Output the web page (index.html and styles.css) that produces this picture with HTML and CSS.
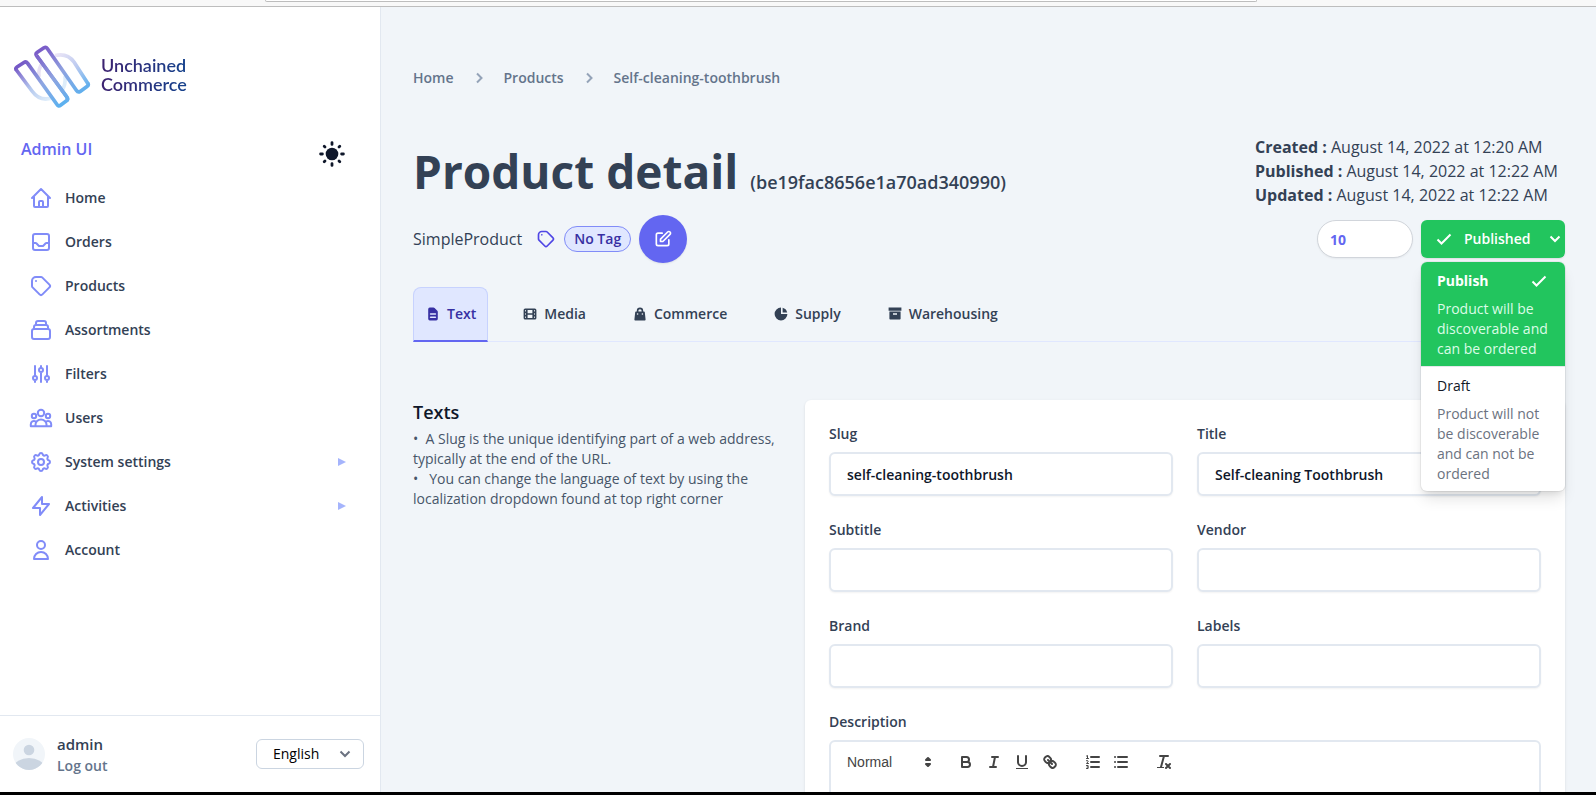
FILE: index.html
```html
<!DOCTYPE html>
<html lang="en">
<head>
<meta charset="utf-8">
<title>Product detail - Unchained Commerce</title>
<link rel="stylesheet" href="styles.css">
</head>
<body>
<div class="browser-edge"><div class="address-bar"></div></div>
<div class="app">
  <aside class="sidebar">
    <a class="brand" href="#">
      <svg class="brand-mark" viewBox="0 0 78 64" fill="none" stroke-width="3.700" stroke-linejoin="round" aria-hidden="true">
        <defs>
          <linearGradient id="bar" gradientUnits="userSpaceOnUse" x1="26" y1="6" x2="62" y2="54"><stop offset="0" stop-color="#7a5cc8"/><stop offset=".5" stop-color="#8fa3e0"/><stop offset="1" stop-color="#5fb0ee"/></linearGradient>
          <linearGradient id="barLeft" gradientUnits="userSpaceOnUse" x1="8" y1="18" x2="48" y2="60"><stop offset="0" stop-color="#7558c6"/><stop offset=".5" stop-color="#8fa6e2"/><stop offset="1" stop-color="#5db1ef"/></linearGradient>
          <linearGradient id="fadeLeft" gradientUnits="userSpaceOnUse" x1="4" y1="20" x2="36" y2="56"><stop offset="0" stop-color="#7558c6"/><stop offset=".55" stop-color="#b4c8ee"/><stop offset="1" stop-color="#e2f0fb"/></linearGradient>
          <linearGradient id="fadeRight" gradientUnits="userSpaceOnUse" x1="44" y1="8" x2="75" y2="42"><stop offset="0" stop-color="#ebe5f6"/><stop offset=".5" stop-color="#bccaf0"/><stop offset="1" stop-color="#5fb0ee"/></linearGradient>
        </defs>
        <path d="M26 32C25 26 27 21 30 17" stroke="#e9e2f4"/>
        <path d="M52 31C53 38 51 43 48 47" stroke="#deedfa"/>
        <path d="M3 24.500L19 46C24 53 31 56 40 52.500" stroke="url(#fadeLeft)"/>
        <path d="M42 10.500C50 8.500 56 10 61 17L75 38.800" stroke="url(#fadeRight)"/>
        <path d="M23.500 10.500L53.500 51.500Q55.500 54.200 53.500 55.800L47.500 60.200Q45.500 61.800 44 59.500L14.500 18.200Q13 16.200 11 17.500L4 22Q2.200 23.200 3.300 25" stroke="url(#barLeft)"/>
        <path d="M23.500 10.500Q22.300 8.500 24.300 7.200L31 2.800Q33 1.600 34.300 3.500L63.500 45.500Q65 47.800 67.200 46.400L74 41.600Q76 40.200 74.800 38.300" stroke="url(#bar)"/>
        <path d="M23.500 10.500L53.500 51.500Q55.500 54.200 53.500 55.800" stroke="url(#bar)"/>
      </svg>
      <span class="brand-name">Unchained<br>Commerce</span>
    </a>
    <div class="sidebar-title">
      <span>Admin UI</span>
      <button class="theme-toggle" type="button" aria-label="Toggle theme">
        <svg viewBox="0 0 28 28" width="28" height="28" stroke="currentColor" stroke-width="2.800" stroke-linecap="round"><circle cx="14" cy="14" r="6.300" fill="currentColor" stroke="none"/><path d="M14 2.600v1.800M14 23.600v1.800M2.600 14h1.800M23.600 14h1.800M6.200 6.200l.8.800M21 21l.8.800M6.200 21.800l.8-.8M21 7l.8-.8"/></svg>
      </button>
    </div>
    <nav class="nav" aria-label="Main">
      <a href="#"><svg class="icon" viewBox="0 0 24 24"><path d="M3 12l2-2m0 0l7-7 7 7M5 10v10a1 1 0 001 1h3m10-11l2 2m-2-2v10a1 1 0 01-1 1h-3m-6 0a1 1 0 001-1v-4a1 1 0 011-1h2a1 1 0 011 1v4a1 1 0 001 1m-6 0h6"/></svg>Home</a>
      <a href="#"><svg class="icon" viewBox="0 0 24 24"><path d="M20 13V6a2 2 0 00-2-2H6a2 2 0 00-2 2v7m16 0v5a2 2 0 01-2 2H6a2 2 0 01-2-2v-5m16 0h-2.586a1 1 0 00-.707.293l-2.414 2.414a1 1 0 01-.707.293h-3.172a1 1 0 01-.707-.293l-2.414-2.414A1 1 0 006.586 13H4"/></svg>Orders</a>
      <a href="#"><svg class="icon" viewBox="0 0 24 24"><path d="M7 7h.01M7 3h5c.512 0 1.024.195 1.414.586l7 7a2 2 0 010 2.828l-7 7a2 2 0 01-2.828 0l-7-7A1.994 1.994 0 013 12V7a4 4 0 014-4z"/></svg>Products</a>
      <a href="#"><svg class="icon" viewBox="0 0 24 24"><path d="M19 11H5m14 0a2 2 0 012 2v6a2 2 0 01-2 2H5a2 2 0 01-2-2v-6a2 2 0 012-2m14 0V9a2 2 0 00-2-2M5 11V9a2 2 0 012-2m0 0V5a2 2 0 012-2h6a2 2 0 012 2v2M7 7h10"/></svg>Assortments</a>
      <a href="#"><svg class="icon" viewBox="0 0 24 24"><path d="M12 6V4m0 2a2 2 0 100 4m0-4a2 2 0 110 4m-6 8a2 2 0 100-4m0 4a2 2 0 110-4m0 4v2m0-6V4m6 6v10m6-2a2 2 0 100-4m0 4a2 2 0 110-4m0 4v2m0-6V4"/></svg>Filters</a>
      <a href="#"><svg class="icon" viewBox="0 0 24 24"><circle cx="12" cy="7" r="3.200"/><circle cx="5" cy="10" r="2.200"/><circle cx="19" cy="10" r="2.200"/><path d="M6.500 20.200V18.500a5.500 5 0 0111 0v1.700zM6.500 20.200H1.800v-2a3.200 3.200 0 014.700-2.800M17.500 20.200h4.700v-2a3.200 3.200 0 00-4.700-2.800"/></svg>Users</a>
      <a href="#"><svg class="icon" viewBox="0 0 24 24"><path d="M10.325 4.317c.426-1.756 2.924-1.756 3.350 0a1.724 1.724 0 002.573 1.066c1.543-.94 3.310.826 2.370 2.370a1.724 1.724 0 001.065 2.572c1.756.426 1.756 2.924 0 3.350a1.724 1.724 0 00-1.066 2.573c.94 1.543-.826 3.310-2.370 2.370a1.724 1.724 0 00-2.572 1.065c-.426 1.756-2.924 1.756-3.350 0a1.724 1.724 0 00-2.573-1.066c-1.543.94-3.310-.826-2.370-2.370a1.724 1.724 0 00-1.065-2.572c-1.756-.426-1.756-2.924 0-3.350a1.724 1.724 0 001.066-2.573c-.94-1.543.826-3.310 2.370-2.370.996.608 2.296.070 2.572-1.065z"/><circle cx="12" cy="12" r="3"/></svg>System settings<svg class="expand" viewBox="0 0 8 8"><path d="M0 0l8 4-8 4z"/></svg></a>
      <a href="#"><svg class="icon" viewBox="0 0 24 24"><path d="M13 10V3L4 14h7v7l9-11h-7z"/></svg>Activities<svg class="expand" viewBox="0 0 8 8"><path d="M0 0l8 4-8 4z"/></svg></a>
      <a href="#"><svg class="icon" viewBox="0 0 24 24"><path d="M16 7a4 4 0 11-8 0 4 4 0 018 0zM12 14a7 7 0 00-7 7h14a7 7 0 00-7-7z"/></svg>Account</a>
    </nav>
    <div class="account">
      <svg class="avatar" viewBox="0 0 32 32" aria-hidden="true"><defs><clipPath id="round"><circle cx="16" cy="16" r="16"/></clipPath></defs><g clip-path="url(#round)"><path fill="#f1f5f9" d="M0 0h32v32H0z"/><circle cx="16" cy="12" r="5.300" fill="#cbd5e1"/><ellipse cx="16" cy="29" rx="15" ry="9" fill="#cbd5e1"/></g></svg>
      <div class="account-text"><span>admin</span><a href="#">Log out</a></div>
      <div class="language">
        <select aria-label="Language"><option>English</option></select>
        <svg viewBox="0 0 12 8"><path d="M1.500 1.500l4.500 4.500 4.500-4.500"/></svg>
      </div>
    </div>
  </aside>

  <main class="main">
    <nav class="breadcrumb" aria-label="Breadcrumb">
      <a href="#">Home</a><svg viewBox="0 0 8 12"><path d="M2 1.500L6.500 6 2 10.500"/></svg><a href="#">Products</a><svg viewBox="0 0 8 12"><path d="M2 1.500L6.500 6 2 10.500"/></svg><a href="#">Self-cleaning-toothbrush</a>
    </nav>

    <header class="head">
      <h1>Product detail <small>(be19fac8656e1a70ad340990)</small></h1>
      <div class="dates">
        <div><b>Created :</b> August 14, 2022 at 12:20 AM</div>
        <div><b>Published :</b> August 14, 2022 at 12:22 AM</div>
        <div><b>Updated :</b> August 14, 2022 at 12:22 AM</div>
      </div>
    </header>

    <div class="meta">
      <span class="kind">SimpleProduct</span>
      <svg class="tag-icon" viewBox="0 0 24 24"><path d="M7 7h.01M7 3h5c.512 0 1.024.195 1.414.586l7 7a2 2 0 010 2.828l-7 7a2 2 0 01-2.828 0l-7-7A1.994 1.994 0 013 12V7a4 4 0 014-4z"/></svg>
      <span class="tag">No Tag</span>
      <button class="edit" type="button" aria-label="Edit tags"><svg viewBox="0 0 24 24"><path d="M11 5H6a2 2 0 00-2 2v11a2 2 0 002 2h11a2 2 0 002-2v-5m-1.414-9.414a2 2 0 112.828 2.828L11.828 15H9v-2.828l8.586-8.586z"/></svg></button>
      <input class="sequence" type="text" value="10" aria-label="Sequence">
      <div class="status">
        <button class="status-button" type="button" aria-expanded="true">
          <svg class="check" viewBox="0 0 16 12"><path d="M1.500 6.500L5.500 10.500 14.500 1.500"/></svg>
          <span>Published</span>
          <svg class="chevron" viewBox="0 0 12 8"><path d="M1.500 1.500l4.500 4.500 4.500-4.500"/></svg>
        </button>
        <div class="menu">
          <button class="menu-item selected" type="button">
            <span class="menu-title">Publish <svg class="check" viewBox="0 0 16 12"><path d="M1.500 6.500L5.500 10.500 14.500 1.500"/></svg></span>
            <span class="menu-text">Product will be discoverable and can be ordered</span>
          </button>
          <button class="menu-item" type="button">
            <span class="menu-title">Draft</span>
            <span class="menu-text">Product will not be discoverable and can not be ordered</span>
          </button>
        </div>
      </div>
    </div>

    <nav class="tabs" aria-label="Product sections">
      <a class="active" href="#"><svg viewBox="0 0 20 20"><path fill-rule="evenodd" d="M4 4a2 2 0 012-2h4.586A2 2 0 0112 2.586L15.414 6A2 2 0 0116 7.414V16a2 2 0 01-2 2H6a2 2 0 01-2-2V4zm2 6a1 1 0 011-1h6a1 1 0 110 2H7a1 1 0 01-1-1zm1 3a1 1 0 100 2h6a1 1 0 100-2H7z"/></svg>Text</a>
      <a href="#"><svg viewBox="0 0 20 20"><path fill-rule="evenodd" d="M4 3a2 2 0 00-2 2v10a2 2 0 002 2h12a2 2 0 002-2V5a2 2 0 00-2-2H4zm3 2h6v4H7V5zm8 8v2h1v-2h-1zm-2-2H7v4h6v-4zm2 0h1V9h-1v2zm1-4V5h-1v2h1zM5 5v2H4V5h1zm0 4H4v2h1V9zm-1 4h1v2H4v-2z"/></svg>Media</a>
      <a href="#"><svg viewBox="0 0 20 20"><path fill-rule="evenodd" d="M10 2a4 4 0 00-4 4v1H5a1 1 0 00-.994.890l-1 9A1 1 0 004 18h12a1 1 0 00.994-1.110l-1-9A1 1 0 0015 7h-1V6a4 4 0 00-4-4zm2 5V6a2 2 0 10-4 0v1h4zm-6 3a1 1 0 112 0 1 1 0 01-2 0zm7-1a1 1 0 100 2 1 1 0 000-2z"/></svg>Commerce</a>
      <a href="#"><svg viewBox="0 0 20 20"><path d="M2 10a8 8 0 018-8v8h8a8 8 0 11-16 0z"/><path d="M12 2.252A8.014 8.014 0 0117.748 8H12V2.252z"/></svg>Supply</a>
      <a href="#"><svg viewBox="0 0 20 20"><path fill-rule="evenodd" d="M2 2h16v4H2zM3 7h14v9a1 1 0 01-1 1H4a1 1 0 01-1-1V7zm4.500 2v2h5v-2z"/></svg>Warehousing</a>
    </nav>

    <section class="texts">
      <div class="intro">
        <h2>Texts</h2>
        <p>•&nbsp; A Slug is the unique identifying part of a web address, typically at the end of the URL.</p>
        <p>• &nbsp; You can change the language of text by using the localization dropdown found at top right corner</p>
      </div>
      <form class="card">
        <label class="field">Slug<input type="text" value="self-cleaning-toothbrush"></label>
        <label class="field">Title<input type="text" value="Self-cleaning Toothbrush"></label>
        <label class="field">Subtitle<input type="text"></label>
        <label class="field">Vendor<input type="text"></label>
        <label class="field">Brand<input type="text"></label>
        <label class="field">Labels<input type="text"></label>
        <div class="field wide">
          <span id="description">Description</span>
          <div class="editor" role="group" aria-labelledby="description">
            <div class="toolbar">
              <div class="format">
                <select aria-label="Text style"><option>Normal</option></select>
                <svg viewBox="0 0 18 18"><path class="fill" d="M7 11l2 2 2-2zM7 7l2-2 2 2z"/><path d="M7 11l2 2 2-2zM7 7l2-2 2 2z"/></svg>
              </div>
              <div class="group">
                <button type="button" aria-label="Bold"><svg viewBox="0 0 18 18"><path d="M5 4h4.500a2.500 2.500 0 010 5H5zM5 9h5.500a2.500 2.500 0 010 5H5z"/></svg></button>
                <button type="button" aria-label="Italic"><svg viewBox="0 0 18 18"><path d="M7 4h6M5 14h6M8 14l2-10"/></svg></button>
                <button type="button" aria-label="Underline"><svg viewBox="0 0 18 18"><path d="M5 3v6a4 4 0 008 0V3"/><path class="fill" d="M3 15h12v1H3z"/></svg></button>
                <button type="button" aria-label="Link"><svg viewBox="0 0 18 18"><path d="M7 7l4 4M8.900 4.577a3.476 3.476 0 01.360 4.679 3.476 3.476 0 01-4.679-.360C3.185 7.500 2.035 6.400 4.217 4.217s3.286-1.036 4.683.360zM13.423 9.100a3.476 3.476 0 00-4.679-.360 3.476 3.476 0 00.360 4.679c1.392 1.392 2.500 2.542 4.679.360s1.036-3.283-.360-4.679z"/></svg></button>
              </div>
              <div class="group">
                <button type="button" aria-label="Numbered list"><svg viewBox="0 0 18 18"><path d="M7 4h8M7 9h8M7 14h8"/><path class="thin" d="M2.500 5.500h2M3.500 5.500v-3l-1 .5M2.500 7.700h1.300q.7.600 0 1.300l-1.300 1.500h2M2.500 12.500h1.600v3H2.500M3 14h1"/></svg></button>
                <button type="button" aria-label="Bulleted list"><svg viewBox="0 0 18 18"><path d="M6 4h9M6 9h9M6 14h9M3 4h.01M3 9h.01M3 14h.01"/></svg></button>
              </div>
              <div class="group">
                <button type="button" aria-label="Clear formatting"><svg viewBox="0 0 18 18"><path d="M5 3h8M6 14L9 3M11 11l4 4M15 11l-4 4"/><path class="fill" d="M2 14h7v1H2z"/></svg></button>
              </div>
            </div>
          </div>
        </div>
      </form>
    </section>
  </main>
</div>
<div class="screen-edge"></div>
</body>
</html>
```
FILE: styles.css
```css
* { box-sizing: border-box; }

body {
  margin: 0;
  height: 100vh;
  display: flex;
  flex-direction: column;
  overflow: hidden;
  background: #f1f5f9;
  color: #334155;
  font: 16px/24px "Open Sans", "Noto Sans", sans-serif;
}

a { color: inherit; text-decoration: none; }
button, input, select { font: inherit; color: inherit; margin: 0; }
button { padding: 0; border: 0; background: none; cursor: pointer; }
svg { flex: none; }
h1, h2, p { margin: 0; }

.browser-edge {
  flex: none;
  height: 7px;
  padding: 0 339px 0 265px;
  background: #f8f8f8;
  border-bottom: 1px solid #bdbdbd;
}
.address-bar {
  height: 2px;
  background: #fff;
  border: 1px solid #bdbdbd;
  border-top: 0;
  border-radius: 0 0 3px 3px;
}
.screen-edge { flex: none; height: 3px; background: #000; }

.app { flex: 1; min-height: 0; display: flex; overflow: hidden; }

/* Sidebar */
.sidebar {
  flex: none;
  width: 381px;
  display: flex;
  flex-direction: column;
  background: #fff;
  border-right: 1px solid #e2e8f0;
}
.brand { display: flex; align-items: center; gap: 10px; padding: 38px 13px 0; }
.brand-mark { width: 78px; height: 64px; }
.brand-name {
  padding-bottom: 4px;
  font: 600 18px/19px Lato, sans-serif;
  background: linear-gradient(90deg, #3d2270, #15428c);
  -webkit-background-clip: text;
  background-clip: text;
  color: transparent;
}
.sidebar-title {
  display: flex;
  justify-content: space-between;
  align-items: flex-start;
  margin: 31px 34px 8px 21px;
  color: #6366f1;
  font-weight: 600;
  line-height: 18px;
}
.theme-toggle { display: flex; color: #0f172a; }

.nav { flex: 1; display: flex; flex-direction: column; font-size: 14px; font-weight: 600; }
.nav a { display: flex; align-items: center; gap: 12px; height: 44px; padding: 0 34px 0 29px; }
.icon {
  width: 24px;
  height: 24px;
  fill: none;
  stroke: #818cf8;
  stroke-width: 2;
  stroke-linecap: round;
  stroke-linejoin: round;
}
.expand { width: 8px; height: 8px; margin-left: auto; fill: #a5b4fc; }

.account {
  display: flex;
  align-items: center;
  gap: 12px;
  height: 77px;
  padding: 0 16px 0 13px;
  border-top: 1px solid #e2e8f0;
}
.avatar { width: 32px; height: 32px; }
.account-text { flex: 1; display: flex; flex-direction: column; font-size: 15px; font-weight: 600; }
.account-text a { font-size: 14px; line-height: 20px; color: #64748b; }
.language { position: relative; }
.language select {
  appearance: none;
  width: 108px;
  height: 30px;
  padding: 0 16px;
  border: 1px solid #cbd5e1;
  border-radius: 6px;
  background: #fff;
  color: #000;
  font-size: 14px;
}
.language svg {
  position: absolute;
  right: 13px;
  top: 11px;
  width: 12px;
  height: 8px;
  fill: none;
  stroke: #6b7280;
  stroke-width: 2;
  pointer-events: none;
}

/* Main column */
.main { flex: 1; min-width: 0; padding: 61px 31px 0 32px; }

.breadcrumb {
  display: flex;
  align-items: center;
  gap: 21px;
  font-size: 14px;
  font-weight: 600;
  line-height: 20px;
  color: #64748b;
}
.breadcrumb svg { width: 8px; height: 12px; fill: none; stroke: #94a3b8; stroke-width: 2; }

.head { display: flex; justify-content: space-between; align-items: flex-end; margin-top: 47px; }
h1 { font-size: 46px; font-weight: 700; line-height: 50px; }
h1 small { font-size: 18px; font-weight: 600; }
.dates { width: 310px; }

.meta { display: flex; align-items: center; gap: 8px; margin-top: 8px; }
.kind { margin-right: 6px; }
.tag-icon {
  width: 20px;
  height: 20px;
  fill: none;
  stroke: #4f46e5;
  stroke-width: 2;
  stroke-linejoin: round;
  stroke-linecap: round;
}
.tag {
  padding: 2px 9px;
  border: 1px solid #818cf8;
  border-radius: 13px;
  background: #e0e7ff;
  color: #3730a3;
  font-size: 14px;
  font-weight: 600;
  line-height: 20px;
}
.edit {
  display: flex;
  align-items: center;
  justify-content: center;
  width: 48px;
  height: 48px;
  border-radius: 50%;
  background: #6366f1;
  box-shadow: 0 1px 2px rgba(0, 0, 0, .08);
}
.edit svg {
  width: 20px;
  height: 20px;
  fill: none;
  stroke: #fff;
  stroke-width: 2;
  stroke-linejoin: round;
  stroke-linecap: round;
}
.sequence {
  width: 96px;
  height: 38px;
  margin-left: auto;
  padding: 0 12px;
  border: 1px solid #d1d5db;
  border-radius: 19px;
  background: #fff;
  color: #6366f1;
  font-size: 14px;
  font-weight: 700;
  box-shadow: 0 1px 2px rgba(0, 0, 0, .05);
}

.status { position: relative; z-index: 1; width: 144px; font-size: 14px; line-height: 20px; }
.status-button {
  display: flex;
  align-items: center;
  gap: 12px;
  width: 100%;
  height: 38px;
  padding: 0 4px 0 15px;
  border-radius: 6px;
  background: #22c55e;
  color: #fff;
  font-weight: 600;
  box-shadow: 0 1px 2px rgba(0, 0, 0, .1);
}
.check, .chevron { fill: none; stroke: #fff; stroke-width: 2; }
.check { width: 16px; height: 12px; }
.chevron { width: 12px; height: 8px; margin-left: auto; }
.menu {
  position: absolute;
  top: 42px;
  left: 0;
  right: 0;
  overflow: hidden;
  border-radius: 6px;
  background: #fff;
  box-shadow: 0 0 0 1px rgba(0, 0, 0, .05), 0 10px 15px -3px rgba(0, 0, 0, .12), 0 4px 6px -2px rgba(0, 0, 0, .08);
}
.menu-item {
  display: flex;
  flex-direction: column;
  gap: 8px;
  width: 100%;
  padding: 9px 16px 7px;
  text-align: left;
}
.menu-item + .menu-item { border-top: 1px solid #e5e7eb; }
.menu-title {
  display: flex;
  align-items: center;
  justify-content: space-between;
  width: 100%;
  padding-right: 2px;
  color: #111827;
}
.menu-text { color: #6b7280; }
.selected { background: #22c55e; }
.selected .menu-title { color: #fff; font-weight: 700; }
.selected .menu-text { color: #dcfce7; }

.tabs {
  display: flex;
  gap: 22px;
  height: 55px;
  margin-top: 24px;
  border-bottom: 1px solid #e0e7ff;
  font-size: 14px;
  font-weight: 600;
}
.tabs a {
  display: flex;
  align-items: center;
  gap: 6px;
  height: 55px;
  padding: 0 11px;
  border: 1px solid transparent;
  border-bottom-width: 2px;
  border-radius: 8px 8px 0 0;
}
.tabs svg { width: 16px; height: 16px; fill: currentColor; }
.tabs .active {
  color: #3730a3;
  background: #e0e7ff;
  border-color: #c7d2fe;
  border-bottom-color: #6366f1;
}

.texts {
  display: grid;
  grid-template-columns: repeat(3, minmax(0, 1fr));
  gap: 24px;
  align-items: start;
  margin-top: 58px;
}
.intro { color: #475569; font-size: 14px; line-height: 20px; }
h2 { margin-bottom: 5px; color: #0f172a; font-size: 18px; font-weight: 600; line-height: 24px; }

.card {
  grid-column: span 2;
  display: grid;
  grid-template-columns: repeat(2, minmax(0, 1fr));
  gap: 24px;
  padding: 24px;
  border-radius: 6px;
  background: #fff;
  box-shadow: 0 1px 3px rgba(0, 0, 0, .1);
}
.field {
  display: flex;
  flex-direction: column;
  gap: 8px;
  font-size: 14px;
  font-weight: 600;
  line-height: 20px;
}
.field > input {
  width: 100%;
  height: 44px;
  padding: 0 16px;
  border: 2px solid #e2e8f0;
  border-radius: 6px;
  background: #fff;
  color: #0f172a;
  box-shadow: 0 1px 2px rgba(0, 0, 0, .05);
}
.wide { grid-column: 1 / -1; }
.editor { height: 160px; border: 2px solid #e2e8f0; border-radius: 6px; }
.toolbar {
  display: flex;
  gap: 15px;
  padding: 8px;
  color: #444;
  font: 14px/24px "Liberation Sans", Arial, sans-serif;
}
.toolbar svg {
  width: 18px;
  height: 18px;
  fill: none;
  stroke: #444;
  stroke-width: 2;
  stroke-linecap: round;
  stroke-linejoin: round;
}
.toolbar svg .fill { fill: #444; stroke: none; }
.toolbar svg .thin { stroke-width: 1; }
.format { position: relative; }
.format select {
  appearance: none;
  width: 98px;
  height: 24px;
  padding: 0 8px;
  border: 0;
  background: none;
}
.format svg { position: absolute; right: 0; top: 3px; pointer-events: none; }
.group { display: flex; }
.group button { display: flex; align-items: center; justify-content: center; width: 28px; height: 24px; }
```
